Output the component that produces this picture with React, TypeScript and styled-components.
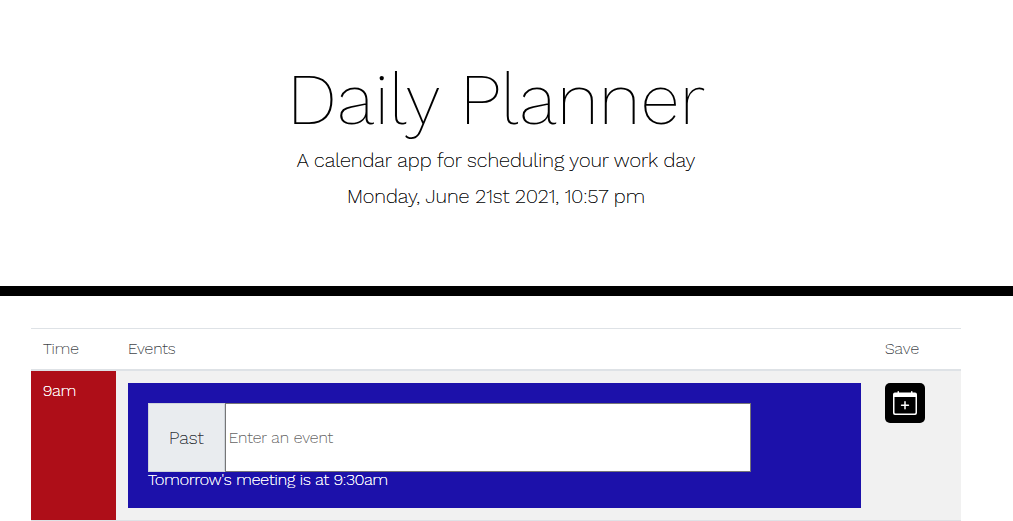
import React from "react";
import styled, { createGlobalStyle } from "styled-components";

const GlobalStyle = createGlobalStyle`
  *, *::before, *::after { box-sizing: border-box; }
  body {
    margin: 0;
    background: #fff;
    color: #000;
    font-family: "Work Sans", Inter, sans-serif;
    font-size: 16px;
    font-weight: 200;
    line-height: 24px;
    /* An unblurred shadow firms up the thin strokes of small text. */
    text-shadow: 0 0 0 currentColor;
  }
`;

const Hero = styled.header`
  padding: 56px 52px 72px 31px;
  border-bottom: 10px solid #000;
  text-align: center;
`;

const Title = styled.h1`
  margin: 0;
  font-size: 72px;
  font-weight: 200;
  line-height: 86px;
  text-shadow: none;
`;

const Lead = styled.p`
  margin: 0;
  font-size: 20px;
  line-height: 36px;
`;

const Planner = styled.main`
  padding: 32px 52px 0 31px;
`;

const Schedule = styled.table`
  width: 100%;
  border-collapse: separate;
  border-spacing: 0;
  table-layout: fixed;
`;

const HeadCell = styled.th<{ $width?: number }>`
  width: ${(p) => (p.$width ? `${p.$width}px` : "auto")};
  padding: 8px 12px;
  border-top: 1px solid #dee2e6;
  border-bottom: 2px solid #dee2e6;
  color: #212529;
  font-weight: 200;
  text-align: left;
  text-shadow: 0 0 0 #8a8d90;
`;

const Cell = styled.td`
  padding: 12px;
  border-bottom: 1px solid #dee2e6;
  background: #f1f1f1;
  vertical-align: top;
`;

const HourCell = styled.th`
  padding: 8px 12px;
  border-bottom: 1px solid #dee2e6;
  background: #ae0e18;
  color: #fff;
  font-weight: 200;
  text-align: left;
  text-shadow: 0 0 0 #fff, 0 0 0 #fff;
  vertical-align: top;
`;

const EventBlock = styled.div`
  padding: 20px;
  background: #1c11aa;
  color: #fff;
`;

const InputGroup = styled.div`
  display: flex;
  height: 69px;
`;

const Status = styled.label`
  display: flex;
  align-items: center;
  padding: 0 20px;
  border: 1px solid #ced4da;
  background: #e9ecef;
  color: #212529;
  font-size: 18px;
  text-shadow: 0 0 0 #495057;
`;

const EventInput = styled.input`
  width: 76%;
  padding: 1px 3px;
  border: 1px solid #767676;
  border-radius: 0;
  background: #fff;
  color: #000;
  font: inherit;
  text-shadow: 0 0 0 #757575;
  &::placeholder { color: #5c5c5c; opacity: 1; }
`;

const Note = styled.p`
  margin: 0;
  line-height: 16px;
  text-shadow: 0 0 0 #fff, 0 0 0 #fff;
`;

const SaveButton = styled.button`
  display: flex;
  align-items: center;
  justify-content: center;
  width: 40px;
  height: 40px;
  padding: 0;
  border: 0;
  border-radius: 5px;
  background: #000;
  color: #fff;
`;

const CalendarPlus = () => (
  <svg width="24" height="24" viewBox="0 0 16 16" fill="currentColor" aria-hidden="true">
    <path
      fillRule="evenodd"
      d="M3.5 0a.5.5 0 0 1 .5.5V1h8V.5a.5.5 0 0 1 1 0V1h1.7A1.3 1.3 0 0 1 16 2.3v12.4a1.3 1.3 0 0 1-1.3 1.3H1.3A1.3 1.3 0 0 1 0 14.7V2.3A1.3 1.3 0 0 1 1.3 1H3V.5a.5.5 0 0 1 .5-.5zM1 4v10.3a.7.7 0 0 0 .7.7h12.6a.7.7 0 0 0 .7-.7V4z"
    />
    <path d="M8 6.7a.5.5 0 0 1 .5.5V9h1.8a.5.5 0 0 1 0 1H8.5v1.8a.5.5 0 0 1-1 0V10H5.7a.5.5 0 0 1 0-1h1.8V7.2a.5.5 0 0 1 .5-.5z" />
  </svg>
);

type Slot = { id: string; hour: string; status: string; note: string };

const slots: Slot[] = [
  { id: "hour-9", hour: "9am", status: "Past", note: "Tomorrow's meeting is at 9:30am" },
];

export default function App() {
  return (
    <>
      <GlobalStyle />
      <Hero>
        <Title>Daily Planner</Title>
        <Lead>A calendar app for scheduling your work day</Lead>
        <Lead>Monday, June 21st 2021, 10:57 pm</Lead>
      </Hero>
      <Planner>
        <Schedule>
          <thead>
            <tr>
              <HeadCell scope="col" $width={85}>Time</HeadCell>
              <HeadCell scope="col">Events</HeadCell>
              <HeadCell scope="col" $width={88}>Save</HeadCell>
            </tr>
          </thead>
          <tbody>
            {slots.map((slot) => (
              <tr key={slot.id}>
                <HourCell scope="row">{slot.hour}</HourCell>
                <Cell>
                  <EventBlock>
                    <InputGroup>
                      <Status htmlFor={slot.id}>{slot.status}</Status>
                      <EventInput id={slot.id} type="text" placeholder="Enter an event" />
                    </InputGroup>
                    <Note>{slot.note}</Note>
                  </EventBlock>
                </Cell>
                <Cell>
                  <SaveButton type="button" aria-label="Save event">
                    <CalendarPlus />
                  </SaveButton>
                </Cell>
              </tr>
            ))}
          </tbody>
        </Schedule>
      </Planner>
    </>
  );
}
